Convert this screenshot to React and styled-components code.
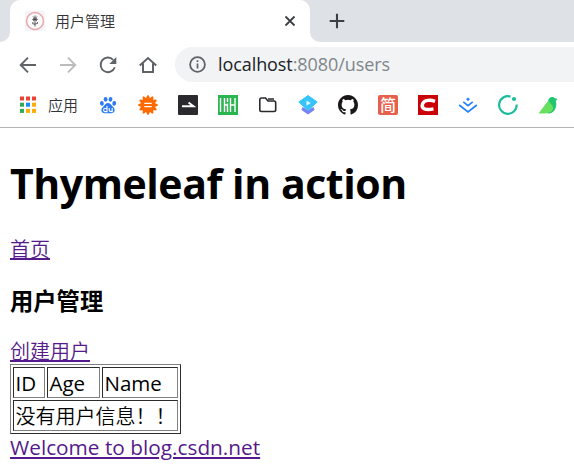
import React from "react";
import styled, { createGlobalStyle } from "styled-components";

const GlobalStyle = createGlobalStyle`
  * { box-sizing: border-box; }
  body {
    margin: 0;
    background: #fff;
    overflow: hidden;
    font-family: "Open Sans", "Noto Sans CJK SC", sans-serif;
  }
  svg { display: block; flex: none; }
`;

const Window = styled.div`
  width: 574px;
  height: 476px;
  overflow: hidden;
`;

const TabStrip = styled.div`
  display: flex;
  height: 42px;
  background: #dee1e6;
`;

const StripEdge = styled.div`
  width: ${(p) => (p.$grow ? "auto" : "10px")};
  flex: ${(p) => (p.$grow ? 1 : "none")};
  background: #fff;
  & > div {
    display: flex;
    align-items: center;
    height: 42px;
    padding-left: ${(p) => (p.$grow ? "19px" : 0)};
    background: #dee1e6;
    border-radius: ${(p) => (p.$grow ? "0 0 0 10px" : "0 0 10px 0")};
  }
`;

const Tab = styled.div`
  display: flex;
  align-items: center;
  width: 300px;
  height: 42px;
  padding: 0 13px 0 15px;
  background: #fff;
  border-radius: 10px 10px 0 0;
`;

const TabTitle = styled.span`
  flex: 1;
  margin-left: 10px;
  font: 350 15px/20px "Noto Sans CJK SC", sans-serif;
  color: #303236;
`;

const Toolbar = styled.div`
  display: flex;
  align-items: center;
  height: 45px;
  padding-left: 8px;
`;

const ToolButton = styled.div`
  display: flex;
  align-items: center;
  justify-content: center;
  width: 40px;
  height: 40px;
  color: ${(p) => (p.$dim ? "#babcbe" : "#5f6368")};
`;

const AddressBar = styled.div`
  display: flex;
  align-items: center;
  flex: 1;
  height: 35px;
  margin-left: 7px;
  padding-left: 14px;
  background: #f1f3f4;
  border-radius: 18px 0 0 18px;
`;

const Url = styled.span`
  margin: -2px 0 0 12px;
  font-size: 18px;
  line-height: 24px;
  letter-spacing: -0.08px;
  color: #80868b;
  white-space: nowrap;
`;

const Host = styled.span`
  color: #202124;
`;

const Bookmarks = styled.div`
  display: flex;
  align-items: center;
  height: 41px;
  padding: 0 0 5px 18px;
  border-bottom: 1px solid #b4b4b4;
`;

const AppsLink = styled.div`
  display: flex;
  align-items: center;
  gap: 10px;
  width: 70px;
  font: 350 15px/20px "Noto Sans CJK SC", sans-serif;
  color: #303236;
`;

const Bookmark = styled.div`
  display: flex;
  justify-content: center;
  width: 40px;
`;

const Page = styled.main`
  padding: 0 10px;
  color: #000;
`;

const Title = styled.h1`
  margin: 24px 0 0;
  font-size: 41px;
  font-weight: 700;
  line-height: 62px;
  height: 62px;
  letter-spacing: -0.44px;
  white-space: nowrap;
`;

const Line = styled.div`
  height: ${(p) => p.$h}px;
  margin-top: ${(p) => p.$top || 0}px;
`;

const Link = styled.a`
  font-size: ${(p) => (p.$cjk ? 20 : 20.8)}px;
  font-weight: ${(p) => (p.$cjk ? 350 : 400)};
  line-height: 27px;
  color: #551a8b;
  white-space: nowrap;
  text-decoration: underline;
  text-decoration-thickness: 2px;
  text-underline-offset: ${(p) => (p.$cjk ? 1 : 2)}px;
  text-decoration-skip-ink: ${(p) => (p.$cjk ? "none" : "auto")};
`;

const Subtitle = styled.h3`
  margin: 20px 0 0;
  height: 34px;
  font: 700 23.3px/34px "Noto Sans CJK SC", sans-serif;
`;

const Table = styled.table`
  width: 171px;
  height: 70px;
  table-layout: fixed;
  border: 1px solid;
  border-color: #808080 #2c2c2c #2c2c2c #808080;
  border-spacing: 2px;
`;

const Cell = styled.td`
  width: ${(p) => p.$w}px;
  height: 31px;
  padding: 2px 1px 0 1.5px;
  border: 1px solid;
  border-color: #2c2c2c #808080 #808080 #2c2c2c;
  font-size: ${(p) => (p.colSpan ? 20 : 20.5)}px;
  font-weight: ${(p) => (p.colSpan ? 350 : 400)};
  line-height: 27px;
  white-space: nowrap;
`;

const Favicon = () => (
  <svg width="20" height="20" viewBox="0 0 20 20">
    <rect width="20" height="20" fill="#f4f5fb" />
    <circle cx="10" cy="10" r="8.5" fill="#fafafc" stroke="#eba6a9" strokeWidth="1.5" />
    <path d="M10 4.500v11M8 5.500l2 2 2-2M7.300 8.500h5.400M8 7l4 3M12 7l-4 3M7.800 11v2H10l2.500-.5V11" fill="none" stroke="#3d3d3d" strokeWidth=".8" />
  </svg>
);

const CloseIcon = () => (
  <svg width="14" height="14" viewBox="0 0 14 14">
    <path d="M2.5 2.5l9 9m0-9l-9 9" stroke="#3c4043" strokeWidth="1.8" />
  </svg>
);

const PlusIcon = () => (
  <svg width="16" height="16" viewBox="0 0 16 16">
    <path d="M8 .7v14.6M.7 8h14.6" stroke="#3c4043" strokeWidth="2.1" />
  </svg>
);

const Arrow = ({ forward }) => (
  <svg width="18" height="18" viewBox="0 0 18 18">
    <path
      d={forward ? "M1 9h15M9 1.7L16.3 9 9 16.3" : "M17 9H2M9 1.7L1.7 9 9 16.3"}
      fill="none" stroke="currentColor" strokeWidth="1.9"
    />
  </svg>
);

const ReloadIcon = () => (
  <svg width="18" height="18" viewBox="0 0 18 18">
    <path d="M15.8 11.3A7.3 7.3 0 1 1 14.2 3.8" fill="none" stroke="currentColor" strokeWidth="1.9" />
    <path d="M17.3 1v7h-7z" fill="currentColor" />
  </svg>
);

const HomeIcon = () => (
  <svg width="18" height="18" viewBox="0 0 18 18">
    <path d="M.8 9.4L9 2l8.2 7.4M4 7.5v8.6h10V7.5" fill="none" stroke="currentColor" strokeWidth="2" />
  </svg>
);

const InfoIcon = () => (
  <svg width="17" height="17" viewBox="0 0 17 17">
    <circle cx="8.5" cy="8.5" r="7.4" fill="none" stroke="#5f6368" strokeWidth="1.8" />
    <path d="M8.5 7.5v5M8.5 4.3v1.8" stroke="#5f6368" strokeWidth="1.7" />
  </svg>
);

const gridColors = ["#ea4335", "#ea4335", "#ea4335", "#34a853", "#1a8cff", "#fbae05", "#34a853", "#fbae05", "#fbae05"];
const AppsIcon = () => (
  <svg width="20" height="20" viewBox="0 0 20 20">
    {gridColors.map((c, i) => (
      <rect key={i} x={2 + (i % 3) * 6} y={1.5 + Math.floor(i / 3) * 6.2} width="4" height="4" fill={c} />
    ))}
  </svg>
);

const BaiduIcon = () => (
  <svg width="20" height="20" viewBox="0 0 20 20">
    <g fill="#2d7bf4">
      <ellipse cx="3.9" cy="8.4" rx="1.9" ry="2.4" transform="rotate(-12 3.9 8.4)" />
      <ellipse cx="7.6" cy="4.3" rx="1.9" ry="2.4" />
      <ellipse cx="12.5" cy="4.3" rx="1.9" ry="2.4" transform="rotate(8 12.5 4.3)" />
      <ellipse cx="16.2" cy="8.4" rx="1.9" ry="2.4" transform="rotate(10 16.2 8.4)" />
      <path d="M10 8c2 0 3 1.700 4.400 3.200 1.600 1.500 2.500 2.500 2.200 4.500-.4 2.300-2.400 2.800-6.600 2.600-4.200.2-6.200-.3-6.600-2.600-.3-2 .9-3 2.300-4.500C7 9.700 8 8 10 8z" />
    </g>
    <path d="M9 11v5.600H6.800c-1.600 0-1.600-3.100 0-3.100H9M11.200 13v2.300c0 1.300.8 1.300 3 1.300V13" fill="none" stroke="#fff" strokeWidth="1.1" />
  </svg>
);

const GearIcon = () => (
  <svg width="20" height="20" viewBox="0 0 20 20">
    <g fill="#ff6a00">
      {Array.from({ length: 12 }, (_, i) => (
        <path key={i} d="M7.700 4L9.300.3h1.400L12.300 4z" transform={`rotate(${i * 30} 10 10)`} />
      ))}
      <circle cx="10" cy="10" r="7.200" />
    </g>
    <path d="M6.300 8.400h7.400M6.300 11.600h7.400" stroke="#fff" strokeWidth="1.300" />
  </svg>
);

const DartIcon = () => (
  <svg width="20" height="20" viewBox="0 0 20 20">
    <rect width="20" height="20" rx="1" fill="#29292e" />
    <path d="M4 11.200h11.500L10.500 7.500" fill="none" stroke="#fff" strokeWidth="1.900" />
  </svg>
);

const BarsIcon = () => (
  <svg width="20" height="20" viewBox="0 0 20 20">
    <rect width="20" height="20" fill="#2bb551" />
    <path d="M2.500 3v14M6.500 3v14M9.500 3v4M9.500 8.500v8.500M12.500 3v14M17 3v14M6.500 10h3M12.500 10h4.500" stroke="#fff" strokeWidth="1.400" />
  </svg>
);

const FolderIcon = () => (
  <svg width="20" height="20" viewBox="0 0 20 20">
    <path d="M1.800 4.700q0-1.700 1.700-1.700h4l2.500 3h6q1.700 0 1.700 1.700v7.100q0 1.700-1.700 1.700H3.500q-1.700 0-1.700-1.700zM10 4h6" fill="none" stroke="#292a2d" strokeWidth="1.600" />
  </svg>
);

const DiamondIcon = () => (
  <svg width="20" height="20" viewBox="0 0 20 20">
    <path d="M4.500 12l5.500 3 5.500-3 1 3-6.500 4.500L3.500 15z" fill="#7884f4" />
    <path d="M10 .5L19.200 7 10 15.500.8 7z" fill="#36c5fb" stroke="#36c5fb" strokeLinejoin="round" />
    <path d="M8.500 5.400l4.200 2.700-4.200 2.700z" fill="#e8faff" />
  </svg>
);

const GithubIcon = () => (
  <svg width="20" height="20" viewBox="0 0 16 16">
    <path fill="#191717" d="M8 0C3.580 0 0 3.580 0 8c0 3.540 2.290 6.530 5.470 7.590.4.070.55-.17.55-.38 0-.19-.01-.82-.01-1.490-2.010.37-2.530-.49-2.690-.94-.09-.23-.48-.94-.82-1.130-.28-.15-.68-.52-.01-.53.63-.01 1.080.58 1.230.82.72 1.210 1.870.87 2.330.66.070-.52.28-.87.51-1.070-1.780-.2-3.640-.89-3.640-3.950 0-.87.31-1.590.82-2.150-.08-.2-.36-1.020.08-2.120 0 0 .67-.21 2.200.82a7.600 7.600 0 0 1 4 0c1.530-1.040 2.200-.82 2.200-.82.44 1.100.16 1.920.08 2.120.51.56.82 1.270.82 2.150 0 3.070-1.870 3.750-3.650 3.950.29.25.54.73.54 1.480 0 1.070-.01 1.930-.01 2.200 0 .21.15.46.55.38A8.010 8.010 0 0 0 16 8c0-4.420-3.580-8-8-8z" />
  </svg>
);

const JianBadge = styled.div`
  width: 20px;
  height: 20px;
  border-radius: 2px;
  background: #e6604b;
  color: #fff;
  font: 500 16px/19px "Noto Sans CJK SC", sans-serif;
  text-align: center;
`;

const CsdnIcon = () => (
  <svg width="20" height="20" viewBox="0 0 20 20">
    <rect width="20" height="20" fill="#ca0007" />
    <path d="M17 6.300C13 4.800 6 4.600 4.500 9 3 13.800 7.500 15.600 15.500 13.900" fill="none" stroke="#fff" strokeWidth="3.400" />
  </svg>
);

const JuejinIcon = () => (
  <svg width="20" height="20" viewBox="0 0 20 20">
    <path d="M10 2.500l2 1.700-2 1.700-2-1.700z" fill="#1e80ff" />
    <path d="M5.300 6.800l4.700 3.800 4.700-3.800M1.200 10l8.800 7 8.800-7" fill="none" stroke="#1e80ff" strokeWidth="1.600" />
  </svg>
);

const RingIcon = () => (
  <svg width="20" height="20" viewBox="0 0 20 20">
    <path d="M12.500 1.600A8.800 8.800 0 1 0 18.700 9.500" fill="none" stroke="#1abc9c" strokeWidth="2.200" />
    <circle cx="16" cy="4" r="2.100" fill="#1abc9c" />
  </svg>
);

const BirdIcon = () => (
  <svg width="20" height="20" viewBox="0 0 20 20">
    <path d="M10.300 6C10 2.500 14.500.5 17 3.300l2.500.6-1.700 2.200c1.800 6-1.300 12.600-8 12.600z" fill="#21c770" />
    <path d="M10.300 5.500C12.500 9.500 16 10.500 14.800 14.500 13 18.800 6 18.600.5 18.500z" fill="#69df60" />
  </svg>
);

const bookmarks = [
  BaiduIcon, GearIcon, DartIcon, BarsIcon, FolderIcon, DiamondIcon, GithubIcon,
  () => <JianBadge>简</JianBadge>, CsdnIcon, JuejinIcon, RingIcon, BirdIcon,
];

export default function App() {
  return (
    <Window>
      <GlobalStyle />
      <TabStrip>
        <StripEdge><div /></StripEdge>
        <Tab>
          <Favicon />
          <TabTitle>用户管理</TabTitle>
          <CloseIcon />
        </Tab>
        <StripEdge $grow><div><PlusIcon /></div></StripEdge>
      </TabStrip>
      <Toolbar>
        <ToolButton><Arrow /></ToolButton>
        <ToolButton $dim><Arrow forward /></ToolButton>
        <ToolButton><ReloadIcon /></ToolButton>
        <ToolButton><HomeIcon /></ToolButton>
        <AddressBar>
          <InfoIcon />
          <Url><Host>localhost</Host>:8080/users</Url>
        </AddressBar>
      </Toolbar>
      <Bookmarks>
        <AppsLink><AppsIcon />应用</AppsLink>
        {bookmarks.map((Icon, i) => (
          <Bookmark key={i}><Icon /></Bookmark>
        ))}
      </Bookmarks>
      <Page>
        <Title>Thymeleaf in action</Title>
        <Line $h={27} $top={22}><Link $cjk>首页</Link></Line>
        <Subtitle>用户管理</Subtitle>
        <Line $h={26} $top={21}><Link $cjk>创建用户</Link></Line>
        <Table>
          <tbody>
            <tr>
              <Cell $w={32}>ID</Cell>
              <Cell $w={53}>Age</Cell>
              <Cell $w={76}>Name</Cell>
            </tr>
            <tr>
              <Cell colSpan={3}>没有用户信息！！</Cell>
            </tr>
          </tbody>
        </Table>
        <Line $h={27}><Link>Welcome to blog.csdn.net</Link></Line>
      </Page>
    </Window>
  );
}
